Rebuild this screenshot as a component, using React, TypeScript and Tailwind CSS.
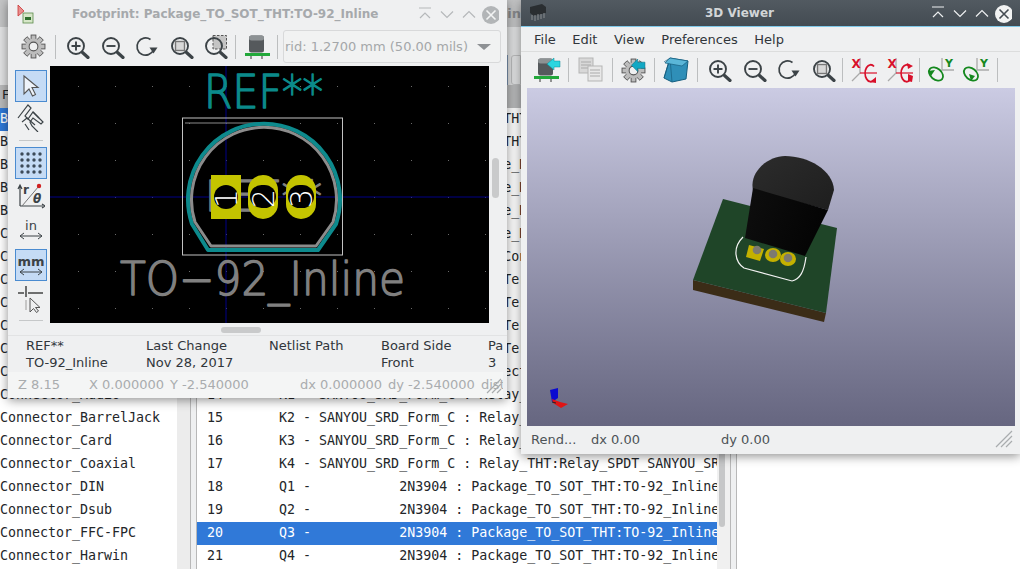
import React from "react";

const ui = { fontFamily: '"DejaVu Sans", sans-serif' };
const mono = { fontFamily: '"DejaVu Sans Mono", monospace' };

const leftNames = [
  "Battery","BGA_Packages","Button_Switch_SMD","Button_Switch_THT","Buzzer_Beeper","Calibration_Scale","Capacitor_SMD","Capacitor_THT","Connector","Connector_AMASS","Connector_Altech","Connector_Amphenol","Connector_Audio","Connector_BarrelJack","Connector_Card","Connector_Coaxial","Connector_DIN","Connector_Dsub","Connector_FFC-FPC","Connector_Harwin",
];

const row = (n: number, ref: string, val: string, fp: string) =>
  `${String(n).padEnd(9)}${ref.padEnd(3)}- ${val} : ${fp}`;
const sanyou = "SANYOU_SRD_Form_C";
const rel = "Relay_THT:Relay_SPDT_SANYOU_SRD_Series_Form_C";
const to92 = "Package_TO_SOT_THT:TO-92_Inline";
const qRow = (n: number, ref: string) =>
  `${String(n).padEnd(9)}${ref.padEnd(3)}-           2N3904 : ${to92}`;
const rightRows = [
  row(2, "C1", "0.1uF_100V", "Capacitor_THT:C_Disc_D5.0mm"),
  row(3, "C2", "0.1uF_100V", "Capacitor_THT:C_Disc_D5.0mm"),
  row(4, "U1", "ATmega328P-PU ", "Package_DIP:DIP-28_W7.62mm"),
  row(5, "U2", "ATmega328P-PU ", "Package_DIP:DIP-28_W7.62mm"),
  row(6, "U3", "74HC595_DIP16 ", "Package_DIP:DIP-16_W7.62mm"),
  row(7, "U4", "74HC595_DIP16 ", "Package_DIP:DIP-16_W7.62mm"),
  row(8, "J1", "Conn_01x02_Female   ", "Connector_PinHeader_2.54mm"),
  row(9, "J2", "Screw_Terminal_01x02", "TerminalBlock_Phoenix:MKDS"),
  row(10, "J3", "Screw_Terminal_01x02", "TerminalBlock_Phoenix:MKDS"),
  row(11, "J4", "Screw_Terminal_01x02", "TerminalBlock_Phoenix:MKDS"),
  row(12, "J5", "Screw_Terminal_01x02", "TerminalBlock_Phoenix:MKDS"),
  row(13, "J6", "Conn_01x04_Male", " Connector_PinHeader"),
  row(14, "K1", sanyou, rel),
  row(15, "K2", sanyou, rel),
  row(16, "K3", sanyou, rel),
  row(17, "K4", sanyou, rel),
  qRow(18, "Q1"),
  qRow(19, "Q2"),
  qRow(20, "Q3"),
  qRow(21, "Q4"),
];

function Mag({ kind, size = 24 }: { kind: "in" | "out" | "redo" | "fit" | "sel"; size?: number }) {
  if (kind === "redo")
    return (
      <svg width={size} height={size} viewBox="0 0 24 24" fill="none">
        <path d="M15.5 4.5A8.6 8.6 0 1 0 18.5 15" stroke="#3c4347" strokeWidth="1.7" />
        <path d="M14.5 12.5h8l-4 6z" fill="#3c4347" />
      </svg>
    );
  return (
    <svg width={size} height={size} viewBox="0 0 24 24" fill="none">
      {kind === "sel" && (
        <rect x="9" y="0.5" width="13.5" height="13.5" fill="#c4c4c4" stroke="#555" strokeDasharray="2.5 1.5" />
      )}
      <circle cx="10" cy="11" r="8" stroke="#3c4347" strokeWidth="1.9" />
      <path d="M16.5 17.5l5.5 5" stroke="#3c4347" strokeWidth="3.2" strokeLinecap="round" />
      {kind === "in" && <path d="M5.5 11h9M10 6.5v9" stroke="#3c4347" strokeWidth="1.9" />}
      {kind === "out" && <path d="M5.5 11h9" stroke="#3c4347" strokeWidth="1.9" />}
      {kind === "fit" && <rect x="5.5" y="6.5" width="9" height="9" fill="#d8d8d8" stroke="#777" strokeWidth="1.4" />}
    </svg>
  );
}

function Gear({ arrow }: { arrow?: boolean }) {
  const teeth = Array.from({ length: 8 }, (_, i) => i * 45);
  return (
    <svg width="25" height="25" viewBox="0 0 24 24">
      <g>
        {teeth.map((t) => (
          <rect key={t} x="9.7" y="1" width="4.6" height="5" fill="#bcbcbc" stroke="#555" strokeWidth="0.9" transform={`rotate(${t} 12 12)`} />
        ))}
        <circle cx="12" cy="12" r="7.6" fill="#bcbcbc" />
        <circle cx="12" cy="12" r="4.2" fill="#eff0f1" stroke="#555" strokeWidth="1" />
      </g>
      {arrow && <path d="M10 7l6-6v3h7v6h-7v3z" fill="#12a8c4" stroke="#0b6d80" strokeWidth="0.5" />}
    </svg>
  );
}

function Cap({ arrow }: { arrow?: boolean }) {
  return (
    <svg width="28" height="26" viewBox="0 0 28 26">
      <rect x="5" y="1.5" width="15" height="17" rx="2.5" fill="#55595c" />
      <rect x="5" y="1.5" width="15" height="5" rx="2.5" fill="#8d9294" />
      <rect x="1" y="19" width="25" height="3" fill="#22a83a" />
      <path d="M7 22v3M18 22v3" stroke="#333" strokeWidth="1" />
      {arrow && <path d="M14 7l7-6v3h6v6h-6v3z" fill="#2ad6e0" stroke="#0e8a95" strokeWidth="0.5" />}
    </svg>
  );
}

function Sep() {
  return <div className="h-[24px] w-px shrink-0 bg-[#bcbebf]" />;
}

function RotX({ flip }: { flip?: boolean }) {
  const c = "#d8102a";
  return (
    <svg width="28" height="28" viewBox="0 0 28 28">
      <path d="M11 2v15L3 25" stroke="#aaa" strokeWidth="1.3" fill="none" />
      <text x="2.5" y="12" fontSize="12" fontWeight="700" fill={c} fontFamily="DejaVu Sans">X</text>
      <path d="M11 17h17" stroke={c} strokeWidth="1.2" />
      <path d="M25 10.5A5.5 8.5 0 1 0 25 24" stroke={c} strokeWidth="1.8" fill="none" />
      <path d={flip ? "M22 7l6 3-5 3z" : "M21 26l6-5 0 6z"} fill={c} />
      {flip && <path d="M23 18l5 2-1 6-4-1z" fill={c} />}
    </svg>
  );
}

function RotY({ flip }: { flip?: boolean }) {
  const c = "#14881e";
  return (
    <svg width="28" height="28" viewBox="0 0 28 28">
      <path d="M16 2v12h12" stroke="#aaa" strokeWidth="1.3" fill="none" />
      <text x="19" y="11" fontSize="11" fontWeight="700" fill={c} fontFamily="DejaVu Sans">Y</text>
      <ellipse cx="10" cy="18" rx="8" ry="5.5" transform="rotate(40 10 18)" stroke={c} strokeWidth="1.8" fill="none" />
      <path d={flip ? "M8 18l6 2-4 5z" : "M2 15l7-1-4 6z"} fill={c} />
    </svg>
  );
}

function WinBtns({ color, close, closeX }: { color: string; close: string; closeX: string }) {
  return (
    <svg width="88" height="24" viewBox="0 0 88 24" fill="none" className="shrink-0">
      <path d="M8 6h12M9 16l5-5 5 5" stroke={color} strokeWidth="1.2" />
      <path d="M30 9.5l6 6 6-6" stroke={color} strokeWidth="1.2" />
      <path d="M52 15.5l6-6 6 6" stroke={color} strokeWidth="1.2" />
      <circle cx="80" cy="13" r="9" fill={close} />
      <path d="M75.5 8.5l9 9M84.5 8.5l-9 9" stroke={closeX} strokeWidth="1.6" />
    </svg>
  );
}

function SideBtn({ on, className = "", children }: { on?: boolean; className?: string; children: React.ReactNode }) {
  return (
    <div className={`flex h-[32px] w-[32px] items-center justify-center border ${on ? "border-[#4a8bd0] bg-[#c5dbf5]" : "border-transparent"} ${className}`}>
      {children}
    </div>
  );
}

function FootprintCanvas() {
  const strokeFont = { strokeLinejoin: "round" as const, strokeLinecap: "round" as const };
  return (
    <svg width="439" height="257" viewBox="50 66 439 257" className="block shrink-0 bg-black">
      <defs>
        <pattern id="g" x="78" y="86" width="37" height="37" patternUnits="userSpaceOnUse">
          <rect width="1" height="1" fill="#6a6a6a" />
        </pattern>
      </defs>
      <rect x="50" y="66" width="439" height="257" fill="url(#g)" />
      <path d="M226 66v257M50 197h439" stroke="#000088" strokeWidth="1" />
      <rect x="182.5" y="118" width="160" height="137" fill="none" stroke="#c2c2c2" strokeWidth="1" />
      <path d="M185 123h80" stroke="#8a8a8a" strokeWidth="1" />
      <text x="204" y="108" fontSize="47" fill="#0b8a8a" stroke="#0b8a8a" strokeWidth="1.5" fontFamily="DejaVu Sans" fontWeight="200" textLength="119" lengthAdjust="spacingAndGlyphs" style={strokeFont}>REF**</text>
      <path d="M208 250L192 224A76 76 0 1 1 336 224L318 250Z" fill="none" stroke="#0d8a8d" strokeWidth="4" strokeLinejoin="round" />
      <path d="M211 246L195 222A72.5 72.5 0 1 1 333 222L316 246Z" fill="none" stroke="#8c8c8c" strokeWidth="3" strokeLinejoin="round" />
      <text x="205" y="211" fontSize="43" fill="#808080" stroke="#808080" strokeWidth="1.5" fontFamily="DejaVu Sans" fontWeight="200" textLength="117" lengthAdjust="spacingAndGlyphs" style={strokeFont}>REF**</text>
      <rect x="211" y="175" width="30" height="44" fill="#c4c400" />
      <circle cx="226" cy="197" r="12" fill="#000" />
      <rect x="248" y="175" width="30" height="44" rx="15" fill="#c4c400" />
      <rect x="250" y="185" width="26" height="23" rx="11.5" fill="#000" />
      <rect x="286" y="175" width="30" height="44" rx="15" fill="#c4c400" />
      <rect x="288" y="185" width="26" height="23" rx="11.5" fill="#000" />
      <g fill="#ffffff" fontFamily="DejaVu Sans" fontWeight="200" fontSize="30">
        <text transform="translate(237 208) rotate(-90)">1</text>
        <text transform="translate(274 208) rotate(-90)">2</text>
        <text transform="translate(312 208) rotate(-90)">3</text>
      </g>
      <text x="120" y="295" fontSize="46" fill="#808080" stroke="#808080" strokeWidth="1.5" fontFamily="DejaVu Sans" fontWeight="200" textLength="285" lengthAdjust="spacingAndGlyphs" style={strokeFont}>TO−92_Inline</text>
    </svg>
  );
}

function ViewerScene() {
  return (
    <svg viewBox="527 88 488 338" className="block h-full w-full">
      <defs>
        <linearGradient id="front" x1="0" y1="0" x2="1" y2="0.3">
          <stop offset="0" stopColor="#0e0e0e" />
          <stop offset="1" stopColor="#040404" />
        </linearGradient>
        <linearGradient id="cap" x1="0" y1="0" x2="1" y2="1">
          <stop offset="0" stopColor="#2c2c2c" />
          <stop offset="1" stopColor="#1e1e1e" />
        </linearGradient>
      </defs>
      <path d="M693 280L826 313L824 322L693 290Z" fill="#3b2c17" />
      <path d="M723 199L837 228L826 313L693 280Z" fill="#1f4528" />
      <path d="M743 237C732 248 735 262 744 268L792 281C800 279 804 272 806 257" fill="none" stroke="#f2f2f2" strokeWidth="1.2" />
      <path d="M749 245L764 249L760 261L746 257Z" fill="#c4b100" />
      <ellipse cx="773" cy="255" rx="8" ry="7" fill="#c4b100" />
      <ellipse cx="788" cy="259" rx="8" ry="7" fill="#c4b100" />
      <circle cx="757" cy="250" r="4.3" fill="#7d7a70" />
      <circle cx="773" cy="254" r="4.3" fill="#7d7a70" />
      <circle cx="788" cy="258" r="4.3" fill="#7d7a70" />
      <path d="M753 190C749 172 768 156 785 156C808 156 833 170 834 190L828 210Z" fill="url(#cap)" />
      <path d="M753 188L828 210L805 256L745 238Z" fill="url(#front)" />
      <path d="M550 390L558 388L558 398L552 402Z" fill="#0a0ad0" />
      <path d="M552 399L560 402L568 404L561 408L553 403Z" fill="#e01414" />
      <path d="M552 402l4 1" stroke="#222" strokeWidth="1" />
    </svg>
  );
}

export default function App() {
  return (
    <div className="relative h-[569px] w-[1020px] overflow-hidden bg-white text-[13px] text-[#232629]" style={ui}>
      {/* Main application behind */}
      <div className="flex h-full flex-col">
        <div className="flex h-[27px] items-center justify-end bg-[#c4c5c6] pr-[499px] text-[13px] font-bold text-[#8a8c8e]">in</div>
        <div className="flex h-[58px] items-start justify-end bg-[#e2e3e4] pt-[28px] pr-[499px]">
          <div className="flex h-[30px] w-[14px] gap-[3px]">
            <div className="w-px bg-[#7b93b0]" />
            <div className="h-full w-[10px] rounded-l-[3px] border border-[#bdbebf]" />
          </div>
        </div>
        <div className="h-[23px] bg-[#b9babb] text-[#232629]">
          <span className="pl-[2px]">F</span>
        </div>
        <div className="flex min-h-0 flex-1">
          <div className="w-[177px] overflow-hidden bg-white text-[13.3px] leading-[22px] whitespace-pre" style={mono}>
            {leftNames.map((n, i) => (
              <div key={n} className={`h-[23px] ${i === 0 ? "bg-[#3079d8] text-white" : ""}`}>{n}</div>
            ))}
          </div>
          <div className="w-[13px] bg-[#ececec]" />
          <div className="w-[7px] border-x border-[#b8b8b8] bg-[#eff0f1]" />
          <div className="w-[520px] overflow-hidden bg-white text-[13.3px] leading-[22px] whitespace-pre" style={mono}>
            {rightRows.map((r, i) => (
              <div key={i} className={`h-[23px] pl-[10px] ${i === 18 ? "bg-[#3079d8] text-white" : ""}`}>{r}</div>
            ))}
          </div>
          <div className="relative w-[13px] bg-[#f0f0f0]">
            <div className="absolute left-[2px] top-[0px] h-[419px] w-[6px] rounded-full bg-[#c6c7c8]" />
          </div>
          <div className="w-[7px] border-x border-[#b8b8b8] bg-[#eff0f1]" />
          <div className="flex-1 bg-white" />
        </div>
      </div>

      {/* Footprint viewer window */}
      <div className="absolute left-[8px] top-0 flex h-[398px] w-[499px] flex-col bg-[#eff0f1] shadow-[0_2px_10px_rgba(0,0,0,0.45)]">
        <div className="flex h-[27px] items-center pl-[8px] pr-[8px]">
          <svg width="18" height="20" viewBox="0 0 18 20" className="shrink-0">
            <path d="M2 1v11l6-5z" fill="#e88f8f" stroke="#c33" strokeWidth="0.8" />
            <rect x="7" y="9" width="10" height="10" fill="#d6e6c8" stroke="#5a8a4a" strokeWidth="0.8" />
            <rect x="9" y="13" width="6" height="3" fill="#2d6e2d" />
          </svg>
          <div className="ml-[38px] flex-1 text-[12px] font-bold whitespace-pre text-[#a6a9ac]">Footprint: Package_TO_SOT_THT:TO-92_Inline</div>
          <WinBtns color="#b5b8ba" close="#b2b5b7" closeX="#f2f3f3" />
        </div>
        <div className="flex h-[39px] items-center pl-[13px]">
          <Gear />
          <div className="ml-[9px]"><Sep /></div>
          <div className="ml-[10px] flex items-center gap-[10.5px]">
            <Mag kind="in" />
            <Mag kind="out" />
            <Mag kind="redo" />
            <Mag kind="fit" />
            <Mag kind="sel" />
          </div>
          <div className="ml-[7px]"><Sep /></div>
          <div className="ml-[8px]"><Cap /></div>
          <div className="ml-[5px]"><Sep /></div>
          <div className="ml-[5px] flex h-[33px] w-[218px] shrink-0 items-center justify-between overflow-hidden rounded-[3px] border border-[#d8d9da] bg-[#f1f2f2] pr-[9px] text-[#a4a7a9]">
            <span className="whitespace-pre pl-[1px] text-[13px]">rid: 1.2700 mm (50.00 mils)</span>
            <span className="h-0 w-0 border-x-[7px] border-t-[6px] border-x-transparent border-t-[#8e9194]" />
          </div>
        </div>
        <div className="flex h-[257px]">
          <div className="flex w-[42px] shrink-0 flex-col items-start pl-[7px] pt-[4px]">
            <SideBtn on>
              <svg width="18" height="24" viewBox="0 0 18 24"><path d="M2 2v18l5-5 3.5 7 3-1.5L10 13.5h6z" fill="#eef3fa" stroke="#555" strokeWidth="1.1" /></svg>
            </SideBtn>
            <SideBtn>
              <svg width="28" height="28" viewBox="0 0 28 28" fill="none" stroke="#3c4347" strokeWidth="1.2">
                <path d="M1 14L11 1l3 3-6 8 3 3 5-7 10 10-2 2-8-6-3 4 2 4 6 6" />
                <path d="M5 18l5-4 8 7M8 20l4 6M16 8l3 3M19 11l3 3" />
              </svg>
            </SideBtn>
            <div className="mx-[4px] mt-[6px] h-px w-[24px] bg-[#c6c8c9]" />
            <SideBtn on className="mt-[6px]">
              <svg width="24" height="24" viewBox="0 0 24 24" fill="#3c4a58">
                {[3, 9, 15, 21].flatMap((y) => [3, 9, 15, 21].map((x) => <circle key={`${x}-${y}`} cx={x} cy={y} r="1.7" />))}
              </svg>
            </SideBtn>
            <SideBtn>
              <svg width="28" height="28" viewBox="0 0 28 28">
                <path d="M3 25h23M3 25V5M1 8l2-4 2 4M25 23l3 2-3 2" stroke="#3c4347" strokeWidth="1.2" fill="none" />
                <text x="6" y="13" fontSize="12" fontWeight="700" fill="#3c4347" fontFamily="DejaVu Sans">r</text>
                <path d="M5 25L22 5" stroke="#777" strokeWidth="1" />
                <circle cx="22" cy="5" r="2.2" fill="#d02020" />
                <text x="16" y="22" fontSize="12" fontWeight="700" fontStyle="italic" fill="#3c4347" fontFamily="DejaVu Sans">θ</text>
              </svg>
            </SideBtn>
            <SideBtn className="mt-[2px]">
              <div className="flex flex-col items-center text-[13px] leading-[13px] text-[#3c4347]">
                <span>in</span>
                <svg width="24" height="8" viewBox="0 0 24 8"><path d="M1 4h22M5 1L1 4l4 3M19 1l4 3-4 3" stroke="#3c4347" fill="none" /></svg>
              </div>
            </SideBtn>
            <SideBtn on className="mt-[4px]">
              <div className="flex flex-col items-center text-[13px] font-bold leading-[13px] text-[#3c4347]">
                <span>mm</span>
                <svg width="24" height="8" viewBox="0 0 24 8"><path d="M1 4h22M5 1L1 4l4 3M19 1l4 3-4 3" stroke="#3c4347" fill="none" /></svg>
              </div>
            </SideBtn>
            <SideBtn className="mt-[2px]">
              <svg width="26" height="28" viewBox="0 0 26 28" fill="none">
                <path d="M8 1v11M0 8h6M10 8h15" stroke="#444" strokeWidth="1.5" />
                <path d="M8 15v10" stroke="#aaa" strokeWidth="1.2" />
                <path d="M12 13v14l3.5-3.5 3 4 2-1.5-3-3.5h4.5z" fill="#eff0f1" stroke="#555" strokeWidth="1" />
              </svg>
            </SideBtn>
            <div className="mx-[4px] mt-[5px] h-px w-[24px] bg-[#c6c8c9]" />
          </div>
          <FootprintCanvas />
          <div className="relative w-[14px]">
            <div className="absolute left-[3px] top-[92px] h-[40px] w-[7px] rounded-full bg-[#c9cacb]" />
          </div>
        </div>
        <div className="relative h-[13px] border-b border-[#e2e3e4]">
          <div className="absolute left-[213px] top-[4px] h-[6px] w-[40px] rounded-full bg-[#c9cacb]" />
        </div>
        <div className="relative h-[36px] w-[495px] overflow-hidden pt-[1px] text-[13px] leading-[17px] text-[#31363b]">
          {([
            [18, "REF**", "TO-92_Inline"],
            [138, "Last Change", "Nov 28, 2017"],
            [261, "Netlist Path", ""],
            [373, "Board Side", "Front"],
            [480, "Pad", "3"],
          ] as [number, string, string][]).map(([x, a, b]) => (
            <div key={a} className="absolute top-[1px] whitespace-pre" style={{ left: x }}>
              <div>{a}</div>
              <div>{b}</div>
            </div>
          ))}
        </div>
        <div className="relative flex h-[26px] w-[495px] items-center overflow-hidden whitespace-pre bg-[#f4f5f5] text-[13px] text-[#a9acae]">
          <span className="absolute left-[10px]">Z 8.15</span>
          <span className="absolute left-[81px]">X 0.000000</span>
          <span className="absolute left-[162px]">Y -2.540000</span>
          <span className="absolute left-[292px]">dx 0.000000</span>
          <span className="absolute left-[380px]">dy -2.540000</span>
          <span className="absolute left-[473px]">dist</span>
          <svg className="absolute right-[1px] bottom-[4px]" width="18" height="18" viewBox="0 0 18 18">
            <path d="M17 3L3 17M17 8L8 17M17 13L13 17" stroke="#a9acae" strokeWidth="1.2" />
          </svg>
        </div>
      </div>

      {/* 3D viewer window */}
      <div className="absolute left-[521px] top-0 flex h-[454px] w-[499px] flex-col bg-[#eff0f1] shadow-[0_2px_10px_rgba(0,0,0,0.45)]">
        <div className="flex h-[27px] items-center border-b border-[#7fc8e8] bg-gradient-to-b from-[#525a61] to-[#434b52] pl-[8px] pr-[8px]">
          <svg width="18" height="20" viewBox="0 0 18 20" className="shrink-0">
            <path d="M1 4l12-3 4 3v6L5 13 1 10z" fill="#2a2e31" />
            <path d="M3 12v5M6 12v6M9 11v6M12 11v5M15 10v5" stroke="#8a8e91" strokeWidth="1" />
          </svg>
          <div className="ml-[158px] flex-1 text-[12px] font-bold text-[#d2d5d7]">3D Viewer</div>
          <WinBtns color="#eef0f1" close="#f2f3f3" closeX="#444b52" />
        </div>
        <div className="flex h-[25px] items-center gap-[16.5px] border-b border-[#dcdddd] pl-[13px] pt-[1px] text-[13px] text-[#31363b]">
          <span>File</span>
          <span>Edit</span>
          <span>View</span>
          <span>Preferences</span>
          <span>Help</span>
        </div>
        <div className="flex h-[36px] items-center">
          <div className="flex w-[47px] justify-end pr-[7px]"><Cap arrow /></div>
          <Sep />
          <div className="flex w-[43px] justify-center">
            <svg width="26" height="26" viewBox="0 0 26 26">
              <rect x="1" y="1" width="14" height="15" fill="#d8d8d8" stroke="#b5b5b5" />
              <path d="M3 5h10M3 8h10M3 11h10" stroke="#aaa" />
              <rect x="10" y="9" width="14" height="15" fill="#e8e8e8" stroke="#b5b5b5" />
              <path d="M12 13h10M12 16h10M12 19h10" stroke="#aaa" />
            </svg>
          </div>
          <Sep />
          <div className="flex w-[41px] justify-center"><Gear arrow /></div>
          <Sep />
          <div className="flex w-[42px] justify-center">
            <svg width="26" height="26" viewBox="0 0 26 26">
              <path d="M7 1L25 4l-2 18-14 3-8-4z" fill="#2f8fb8" stroke="#155f80" />
              <path d="M1 21L7 1l2 24M1 5l6-4" fill="none" stroke="#155f80" strokeWidth="0.7" />
              <path d="M7 1L25 4 19 9 2 6z" fill="#5ab6d8" stroke="#155f80" strokeWidth="0.7" />
            </svg>
          </div>
          <Sep />
          <div className="flex w-[144px] items-center gap-[10.5px] pl-[10px]">
            <Mag kind="in" />
            <Mag kind="out" />
            <Mag kind="redo" />
            <Mag kind="fit" />
          </div>
          <Sep />
          <div className="flex w-[76px] items-center gap-[8px] pl-[6px]">
            <RotX />
            <RotX flip />
          </div>
          <Sep />
          <div className="flex w-[77px] items-center gap-[7px] pl-[6px]">
            <RotY />
            <RotY flip />
          </div>
          <Sep />
        </div>
        <div className="mx-[6px] h-[338px] w-[488px] bg-gradient-to-b from-[#cbcbe3] to-[#666680]">
          <ViewerScene />
        </div>
        <div className="relative flex h-[28px] items-center whitespace-pre text-[13px] text-[#4d5357]">
          <span className="absolute left-[10px]">Rend...</span>
          <span className="absolute left-[70px]">dx 0.00</span>
          <span className="absolute left-[200px]">dy 0.00</span>
          <svg className="absolute right-[7px] bottom-[6px]" width="18" height="18" viewBox="0 0 18 18">
            <path d="M17 1L1 17M17 6L6 17M17 11L11 17" stroke="#a9acae" strokeWidth="1.2" />
          </svg>
        </div>
      </div>
    </div>
  );
}
